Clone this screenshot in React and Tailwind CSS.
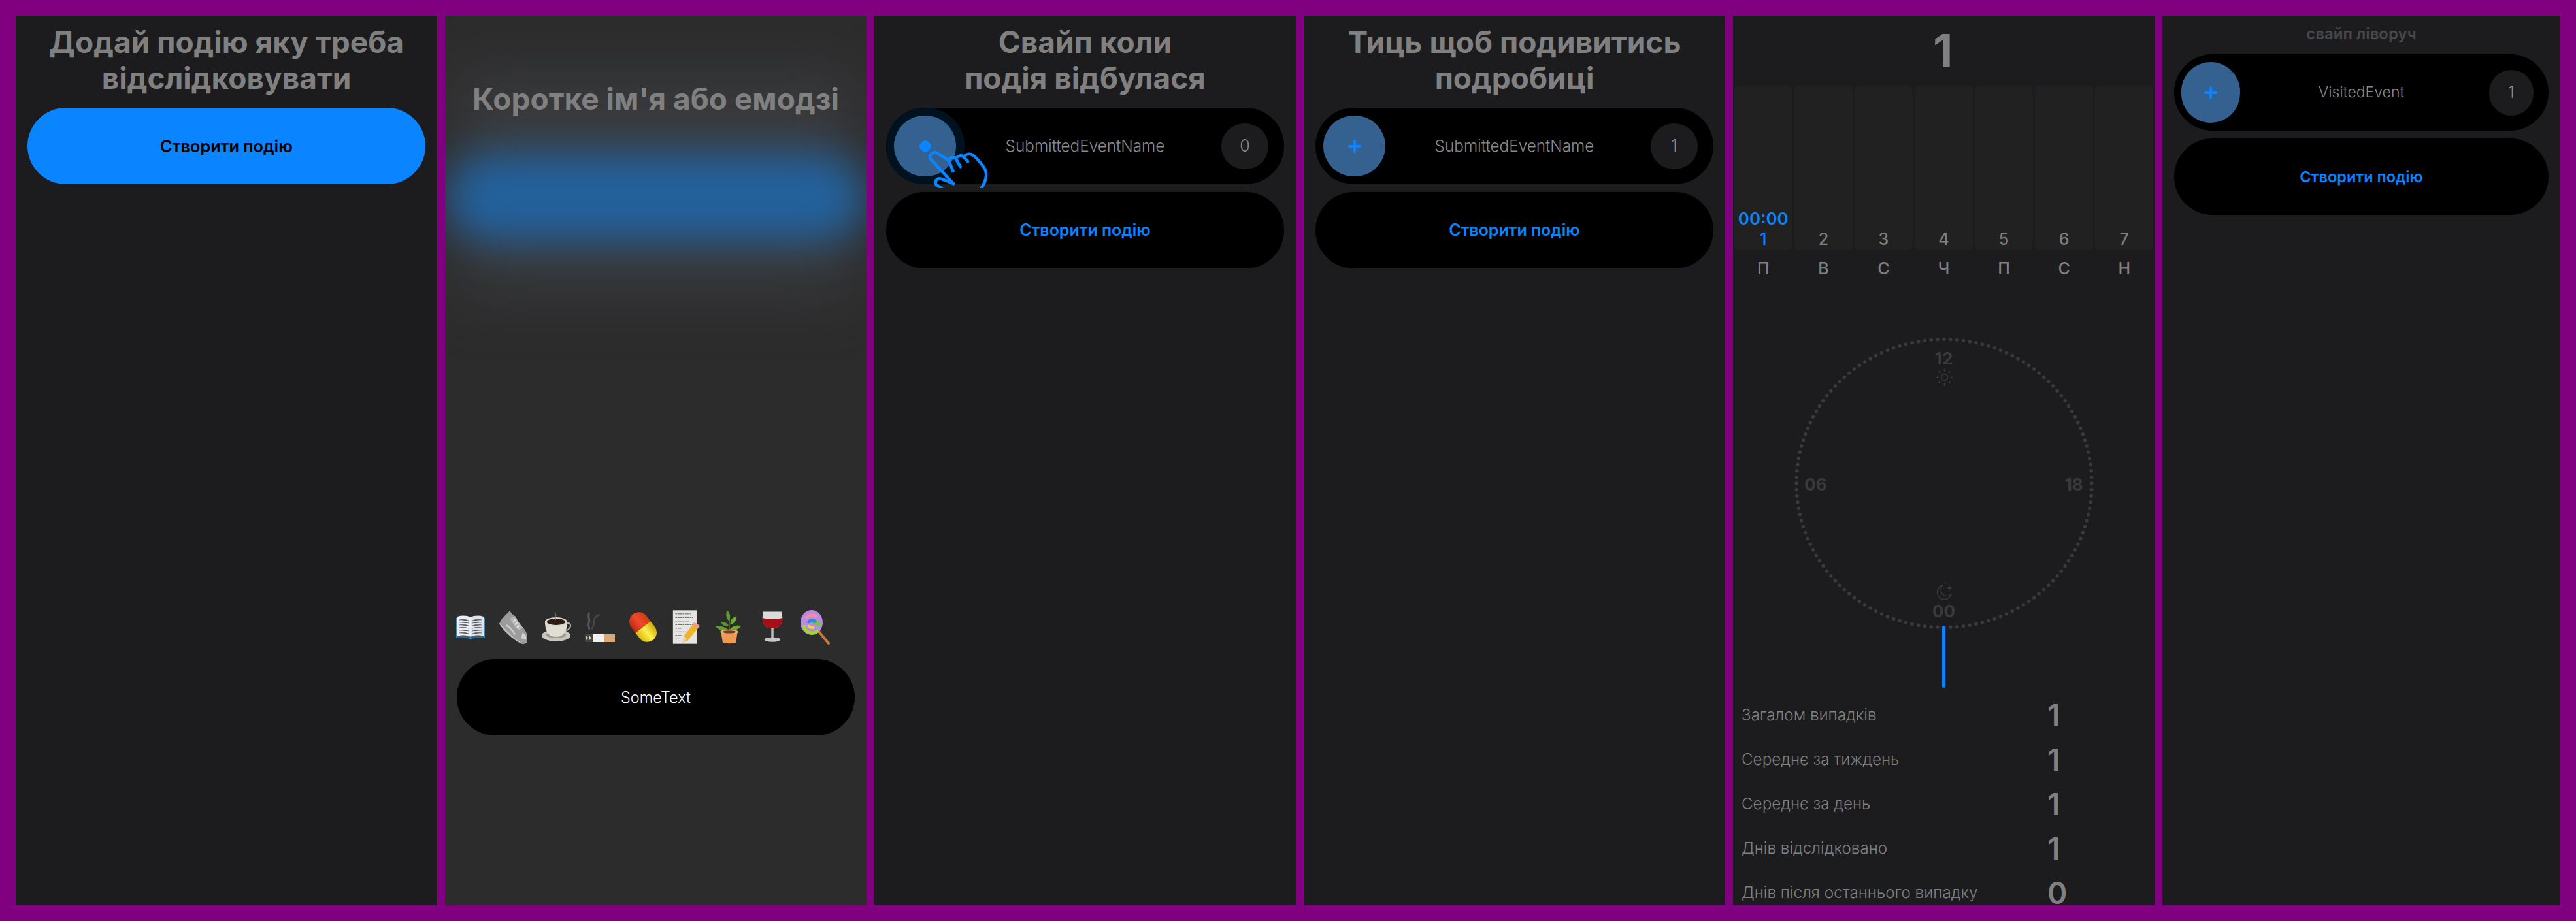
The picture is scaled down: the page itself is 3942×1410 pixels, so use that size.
import React from "react";
import { Sun } from "lucide-react";

const FONT = "font-[family-name:Inter,sans-serif]";

const BookEmoji = () => (
  <svg viewBox="0 0 48 48" className="w-[48px] h-[48px]">
    <path d="M2 10h2v28h40V10h2v31H28l-4 2-4-2H2z" fill="#2f8fc4" />
    <path d="M4 8c7-2 14-2 20 1v30c-6-3-13-3-20-1z" fill="#eceef2" />
    <path d="M44 8c-7-2-14-2-20 1v30c6-3 13-3 20-1z" fill="#dfe2e8" />
    <path d="M4 38c7-1 14-1 20 1 6-2 13-2 20-1v2H4z" fill="#55585e" />
    <g stroke="#71757c" strokeWidth="1">
      <path d="M7 13c5-1 9-1 14 1M7 17c5-1 9-1 14 1M7 21c5-1 9-1 14 1M7 25c5-1 9-1 14 1M7 29c5-1 9-1 14 1M7 33c5-1 9-1 14 1" />
      <path d="M41 13c-5-1-9-1-14 1M41 17c-5-1-9-1-14 1M41 21c-5-1-9-1-14 1M41 25c-5-1-9-1-14 1M41 29c-5-1-9-1-14 1M41 33c-5-1-9-1-14 1" />
    </g>
  </svg>
);

const ShoeEmoji = () => (
  <svg viewBox="0 0 48 54" className="w-[46px] h-[54px]">
    <path d="M18 1c2 4 5 7 9 9 3 7 7 13 12 18 6 6 8 13 6 20-1 4-5 5-9 3C24 44 10 30 2 20 3 14 12 8 18 1z" fill="#9c9c9c" />
    <path d="M2 20c8 10 22 24 34 31 4 2 8 1 9-3l1 1c-1 5-6 6-11 4C22 46 8 33 1 22z" fill="#bdbdbd" />
    <path d="M27 10c3 7 7 13 12 18l-7 4c-6-5-11-12-14-19z" fill="#b8b8b8" />
    <path d="M27 15l-4 3M30 20l-4 3M33 25l-4 3" stroke="#e2e2e2" strokeWidth="2" />
    <path d="M12 24c5 2 11 9 14 15" fill="none" stroke="#c8c8c8" strokeWidth="3" />
    <path d="M38 36c4 1 7 5 6 11l-8-2z" fill="#cfcfcf" />
  </svg>
);

const CoffeeEmoji = () => (
  <svg viewBox="0 0 48 48" className="w-[48px] h-[48px]">
    <ellipse cx="23" cy="37" rx="22" ry="9" fill="#c9c6bb" />
    <ellipse cx="23" cy="36" rx="15" ry="5" fill="#9d9a90" />
    <path d="M40 18c6-1 7 6 1 10l-5 3" fill="none" stroke="#bdbab2" strokeWidth="2" />
    <path d="M6 15c0 12 3 24 17 24s17-12 17-24z" fill="#e0ddd5" />
    <ellipse cx="23" cy="16" rx="17" ry="7" fill="#d8d5cd" />
    <ellipse cx="23" cy="16" rx="14" ry="5" fill="#2d1b13" />
    <path d="M22 1c-3 3 3 3 0 6s2 3 0 6" fill="none" stroke="#6a6a6a" strokeWidth="1.5" />
  </svg>
);

const CigaretteEmoji = () => (
  <svg viewBox="0 0 48 48" className="w-[48px] h-[48px]">
    <path d="M8 2c-4 6 2 9-1 15-1 4 0 7 1 11" fill="none" stroke="#565656" strokeWidth="3" />
    <path d="M24 5c-8 2-10 8-9 14-1 3-2 6-4 8" fill="none" stroke="#474747" strokeWidth="2.5" />
    <rect x="1" y="35" width="12" height="12" fill="#47433d" />
    <path d="M2 37l4 3-3 4zM8 37l3 4-4 4z" fill="#cfcabb" />
    <rect x="13" y="35" width="17" height="12" fill="#f1f1ef" />
    <rect x="30" y="35" width="17" height="12" fill="#d8a878" />
  </svg>
);

const PillEmoji = () => (
  <svg viewBox="0 0 48 48" className="w-[50px] h-[56px]">
    <defs>
      <linearGradient id="pillRed" x1="0" y1="0" x2="1" y2="0">
        <stop offset="0" stopColor="#b82a10" />
        <stop offset="0.5" stopColor="#f2492a" />
        <stop offset="1" stopColor="#cf3a18" />
      </linearGradient>
      <linearGradient id="pillYellow" x1="0" y1="0" x2="1" y2="0">
        <stop offset="0" stopColor="#d9b50c" />
        <stop offset="0.5" stopColor="#fff04d" />
        <stop offset="1" stopColor="#cfa80a" />
      </linearGradient>
    </defs>
    <g transform="rotate(-38 24 24)">
      <path d="M10 24V14a14 14 0 0 1 28 0v10z" fill="url(#pillRed)" />
      <path d="M10 24v10a14 14 0 0 0 28 0V24z" fill="url(#pillYellow)" />
    </g>
  </svg>
);

const MemoEmoji = () => (
  <svg viewBox="0 0 48 56" className="w-[44px] h-[56px]">
    <rect x="2" y="0" width="40" height="56" fill="#e4e4e2" />
    <path d="M6 6h26M6 12h30M6 18h24M6 24h30M6 30h10M6 36h18M6 42h10M6 48h8" stroke="#4a4a4a" strokeWidth="1" strokeDasharray="3 1" />
    <path d="M38 20l9 6-20 24-9 4 2-11z" fill="#f0b429" />
    <path d="M38 20l9 6-3 4-9-6z" fill="#e99a9a" />
    <path d="M18 54l2-11 6 5z" fill="#ecd3a8" />
  </svg>
);

const PlantEmoji = () => (
  <svg viewBox="0 0 48 56" className="w-[44px] h-[56px]">
    <path d="M24 34V10" stroke="#4f7a25" strokeWidth="1.5" />
    <path d="M24 18C18 14 18 6 20 0c5 4 7 10 4 18z" fill="#5f9a2c" />
    <path d="M26 24c-2-7 4-13 10-14 1 6-3 12-10 14z" fill="#6eaa33" />
    <path d="M23 26c-2-5-8-7-13-7 2 6 7 9 13 7z" fill="#5a9329" />
    <path d="M25 32c4-6 11-8 19-6-4 6-12 9-19 6z" fill="#6aa631" />
    <path d="M22 33C18 28 9 25 1 27c5 6 13 9 21 6z" fill="#629d2d" />
    <path d="M10 35h28l-3 19c-4 2-18 2-22 0z" fill="#ee9a55" />
    <ellipse cx="24" cy="36" rx="15" ry="4" fill="#f4ab6b" />
    <ellipse cx="24" cy="36" rx="11" ry="2.4" fill="#6a4022" />
  </svg>
);

const WineEmoji = () => (
  <svg viewBox="0 0 48 56" className="w-[42px] h-[56px]">
    <path d="M8 1h32c3 14 2 26-12 29h-8C6 27 5 15 8 1z" fill="#dcdcdc" />
    <path d="M7 12c8 3 26 3 34 0 1 10-3 16-13 18h-8C10 28 6 22 7 12z" fill="#a50f18" />
    <rect x="22" y="30" width="4" height="18" fill="#bcbcbc" />
    <ellipse cx="24" cy="50" rx="14" ry="4" fill="#c8c8c8" />
  </svg>
);

const LollipopEmoji = () => (
  <svg viewBox="0 0 48 54" className="w-[48px] h-[54px]">
    <path d="M26 30l18 22" stroke="#c97a3f" strokeWidth="4" strokeLinecap="round" />
    <ellipse cx="18" cy="20" rx="17" ry="19" fill="#b98be0" />
    <path d="M18 20a13 14 0 0 1 13 5" stroke="#6fc93a" strokeWidth="6" fill="none" />
    <path d="M6 24a13 14 0 0 0 22 8" stroke="#9fd336" strokeWidth="5" fill="none" />
    <path d="M10 14a10 10 0 0 1 16-2" stroke="#f58aa8" strokeWidth="5" fill="none" />
    <path d="M24 20a6 6 0 0 0-11 1" stroke="#2f86e8" strokeWidth="5" fill="none" />
    <path d="M13 24a6 6 0 0 0 9 3" stroke="#f2d43b" strokeWidth="4" fill="none" />
  </svg>
);

const Hand = () => (
  <svg viewBox="0 0 270 170" className="absolute left-[65px] top-[66px] w-[90px] h-[57px] overflow-hidden">
    <g fill="none" stroke="#0a84ff" strokeWidth="14" strokeLinecap="round" strokeLinejoin="round">
      <path d="M240 175C268 130 272 100 252 72 235 50 220 30 205 20 190 10 172 14 160 26" />
      <path d="M180 48L160 26C150 18 134 22 124 34" />
      <path d="M146 72L124 34C114 24 100 30 92 42" />
      <path d="M112 92L92 42 40 10C20 0 0 18 8 36L114 150" />
      <path d="M114 150C95 143 78 134 58 128 36 122 26 140 36 156L60 170" />
    </g>
  </svg>
);

const Plus = ({ diamond }) =>
  diamond ? (
    <div className="w-[16px] h-[16px] rotate-45 rounded-[5px] bg-[#0a84ff]" />
  ) : (
    <svg viewBox="0 0 20 20" className="w-[20px] h-[20px]">
      <path d="M10 2v16M2 10h16" stroke="#0a84ff" strokeWidth="4" strokeLinecap="round" />
    </svg>
  );

function EventRow({ name, count, swiping, small }) {
  return (
    <div className="relative h-[117px] rounded-full bg-black grid grid-cols-[1fr_auto_1fr] items-center">
      {swiping && <div className="absolute left-0 top-0 w-[120px] h-[117px] rounded-full bg-[#00111f]" />}
      <div className={small ? "pl-[11px]" : "pl-[12px]"}>
        <div className={`relative h-[93px] rounded-full bg-[#34618f] flex items-center justify-center ${small ? "w-[90px]" : "w-[95px]"}`}>
          <Plus diamond={swiping} />
        </div>
      </div>
      <div className={`font-light text-[#8a8a8c] ${small ? "text-[23px]" : "text-[24.3px]"}`}>{name}</div>
      <div className={`flex justify-end ${small ? "pr-[23px]" : "pr-[24px]"}`}>
        <div className={`h-[70px] rounded-full bg-[#1c1c1e] flex items-center justify-center font-light text-[#8a8a8c] text-[25px] ${small ? "w-[68px]" : "w-[72px]"}`}>
          {count}
        </div>
      </div>
      {swiping && <Hand />}
    </div>
  );
}

function CreateButton({ small }) {
  return (
    <div className={`h-[117px] rounded-full bg-black flex items-center justify-center font-semibold text-[#0a84ff] ${small ? "text-[23.5px]" : "text-[25px]"}`}>
      Створити подію
    </div>
  );
}

function Panel({ children, className = "bg-[#1c1c1e] w-[645px]" }) {
  return <div className={`relative h-full shrink-0 overflow-hidden ${className}`}>{children}</div>;
}

function Title({ children }) {
  return (
    <h1 className="pt-[13px] pb-[18px] text-center text-[46px] leading-[55px] font-bold text-[#808080]">{children}</h1>
  );
}

const emojis = [BookEmoji, ShoeEmoji, CoffeeEmoji, CigaretteEmoji, PillEmoji, MemoEmoji, PlantEmoji, WineEmoji, LollipopEmoji];
const days = [["1", "П"], ["2", "В"], ["3", "С"], ["4", "Ч"], ["5", "П"], ["6", "С"], ["7", "Н"]];
const stats = [
  ["Загалом випадків", "1"],
  ["Середнє за тиждень", "1"],
  ["Середнє за день", "1"],
  ["Днів відслідковано", "1"],
  ["Днів після останнього випадку", "0"],
];
// 144 dots round the 24 hour dial
const dots = Array.from({ length: 144 }, (_, i) => {
  const a = (i / 144) * Math.PI * 2;
  return [226 + 226 * Math.sin(a), 220 + 220.5 * Math.cos(a)];
});

function Clock() {
  return (
    <div className="relative mt-[79px] mx-auto w-[452px] h-[440px]">
      <svg viewBox="0 0 452 440" className="w-full h-full overflow-visible">
        {dots.map(([x, y], i) => (
          <circle key={i} cx={x} cy={y} r="2.7" fill="#3a3a3c" />
        ))}
      </svg>
      <span className="absolute left-[226px] top-[28px] -translate-x-1/2 -translate-y-1/2 text-[26px] font-bold text-[#3a3a3c]">12</span>
      <span className="absolute left-[30px] top-[221px] -translate-x-1/2 -translate-y-1/2 text-[26px] font-bold text-[#3a3a3c]">06</span>
      <span className="absolute left-[425px] top-[221px] -translate-x-1/2 -translate-y-1/2 text-[26px] font-bold text-[#3a3a3c]">18</span>
      <span className="absolute left-[226px] top-[415px] -translate-x-1/2 -translate-y-1/2 text-[26px] font-bold text-[#3a3a3c]">00</span>
      <Sun className="absolute left-[212px] top-[43px] w-[29px] h-[29px] text-[#3a3a3c]" strokeWidth={1.4} />
      <svg viewBox="0 0 30 28" className="absolute left-[213px] top-[370px] w-[30px] h-[28px]">
        <path d="M11 6A11 11 0 1 0 24 20 9.5 9.5 0 0 1 11 6z" fill="none" stroke="#3a3a3c" strokeWidth="1.3" strokeLinejoin="round" />
        <path d="M21 5l1.2 4 4 1.2-4 1.2-1.2 4-1.2-4-4-1.2 4-1.2z" fill="#3a3a3c" />
        <path d="M15 0l.6 1.6 1.6.6-1.6.6-.6 1.6-.6-1.6-1.6-.6 1.6-.6z" fill="#3a3a3c" />
      </svg>
    </div>
  );
}

export default function App() {
  return (
    <div className={`w-[3942px] h-[1410px] overflow-hidden bg-[#800080] p-6 flex gap-3 ${FONT}`}>
      {/* 1: empty state */}
      <Panel>
        <Title>Додай подію яку треба<br />відслідковувати</Title>
        <div className="px-[18px]">
          <div className="h-[117px] rounded-full bg-[#0a84ff] flex items-center justify-center font-semibold text-[25.3px] text-black">
            Створити подію
          </div>
        </div>
      </Panel>

      {/* 2: name input with the blurred background */}
      <Panel className="bg-[#2c2c2d] w-[645px] flex flex-col">
        <div className="absolute left-[20px] right-[20px] top-[90px] h-[330px] bg-[#3a3b3d] blur-[45px]" />
        <div className="absolute left-[2px] w-[641px] top-[212px] h-[132px] rounded-full bg-[#22629f] blur-[32px]" />
        <h1 className="relative pt-[100px] text-center text-[46px] leading-[55px] font-bold text-[#808080]">Коротке ім'я або емодзі</h1>
        <div className="relative mt-[753px] pl-[6px] flex items-center h-[56px]">
          {emojis.map((Emoji, i) => (
            <div key={i} className="w-[66px] flex items-center justify-center">
              <Emoji />
            </div>
          ))}
        </div>
        <div className="relative mt-[21px] mx-[18px] h-[117px] rounded-full bg-black flex items-center justify-center text-[23.5px] font-light text-white">
          SomeText
        </div>
      </Panel>

      {/* 3: swipe hint */}
      <Panel>
        <Title>Свайп коли<br />подія відбулася</Title>
        <div className="px-[18px] flex flex-col gap-3">
          <EventRow name="SubmittedEventName" count="0" swiping />
          <CreateButton />
        </div>
      </Panel>

      {/* 4: tap hint */}
      <Panel>
        <Title>Тиць щоб подивитись<br />подробиці</Title>
        <div className="px-[18px] flex flex-col gap-3">
          <EventRow name="SubmittedEventName" count="1" />
          <CreateButton />
        </div>
      </Panel>

      {/* 5: details */}
      <Panel>
        <div className="h-[107px] pr-[3px] flex items-center justify-center text-[70px] font-bold text-[#808080]">1</div>
        <div className="px-[2px] grid grid-cols-7 gap-[3.5px]">
          {days.map(([n], i) => (
            <div key={i} className="h-[252px] rounded-[8px] bg-[#212121] flex flex-col items-center justify-end pb-[2px]">
              {i === 0 && <div className="text-[26px] leading-[32px] font-semibold text-[#0a84ff]">00:00</div>}
              <div className={`text-[25px] leading-[30px] font-medium ${i === 0 ? "text-[#0a84ff]" : "text-[#808080]"}`}>{n}</div>
            </div>
          ))}
        </div>
        <div className="px-[2px] grid grid-cols-7 gap-[3.5px] h-[58px] items-center">
          {days.map(([, d], i) => (
            <div key={i} className="text-center text-[25px] font-medium text-[#808080]">{d}</div>
          ))}
        </div>
        <Clock />
        <div className="relative -mt-[2px] mx-auto w-[5px] h-[95px] rounded-full bg-[#0a84ff]" />
        <div className="mt-[8px] pl-[13px]">
          {stats.map(([label, value]) => (
            <div key={label} className="h-[68px] flex items-center">
              <div className="w-[468px] text-[24.2px] font-light text-[#808080]">{label}</div>
              <div className="text-[46px] leading-[36px] font-semibold text-[#808080]">{value}</div>
            </div>
          ))}
        </div>
      </Panel>

      {/* 6: swipe left */}
      <Panel className="bg-[#1c1c1e] w-[609px]">
        <div className="h-[56px] mb-[3px] flex items-center justify-center text-[24px] font-semibold text-[#48484a]">свайп ліворуч</div>
        <div className="px-[18px] flex flex-col gap-3">
          <EventRow name="VisitedEvent" count="1" small />
          <CreateButton small />
        </div>
      </Panel>
    </div>
  );
}
